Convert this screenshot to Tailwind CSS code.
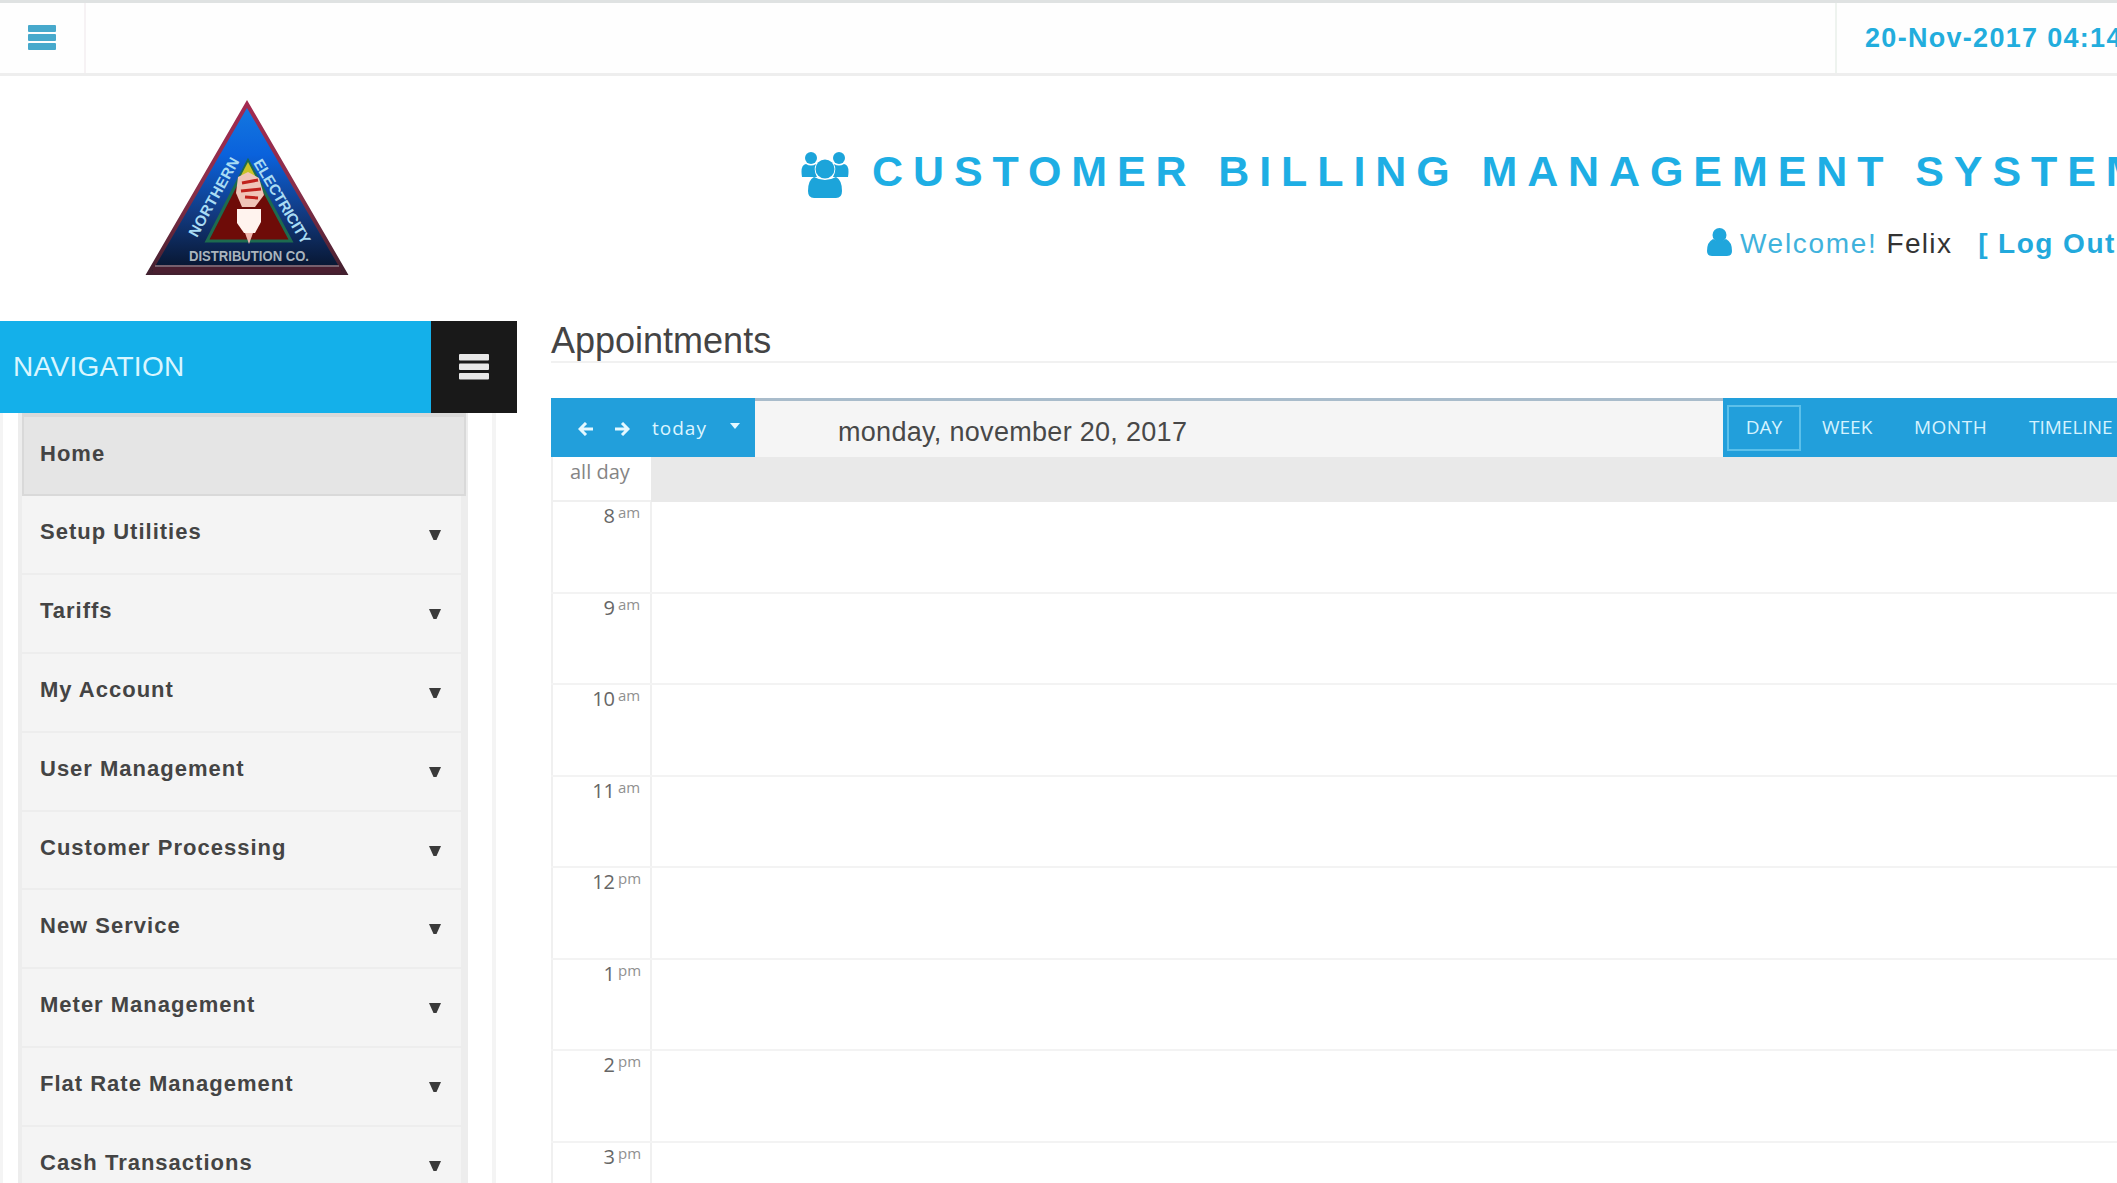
<!DOCTYPE html>
<html lang="en">
<head>
<meta charset="utf-8">
<title>Customer Billing Management System</title>
<script src="https://cdn.jsdelivr.net/npm/@tailwindcss/browser@4"></script>
</head>
<body class="w-[2117px] h-[1183px] overflow-hidden bg-white font-['Liberation_Sans',Arial,sans-serif] whitespace-nowrap">

<!-- Top bar -->
<header class="flex h-[76px] border-t-3 border-b-3 border-t-[#dfe2e2] border-b-[#eeeeee] bg-[#fefefe]">
  <div class="w-[86px] shrink-0 border-r-2 border-[#f6f2f4] pt-[22px] pl-[28px]">
    <svg class="w-[28px] h-[25px]" viewBox="0 0 28 25" fill="#47a9cc"><rect width="28" height="7" rx="1"/><rect y="9" width="28" height="7" rx="1"/><rect y="18" width="28" height="7" rx="1"/></svg>
  </div>
  <div class="w-[1751px] shrink-0 border-r-2 border-[#eef3ef]"></div>
  <div class="pl-[28px] pt-[15px] text-[27px] leading-[40px] tracking-[1.300px] font-bold text-[#22addd]">20-Nov-2017 04:14</div>
</header>

<!-- Brand and title -->
<section class="flex h-[245px]">
  <div class="w-[801px] shrink-0 pl-[145px] pt-[24px]">
    <svg class="w-[204px] h-[176px]" viewBox="0 0 204 176">
      <defs>
        <linearGradient id="sky" x1="0" y1="0" x2="0" y2="1"><stop offset="0" stop-color="#1479e0"/><stop offset=".3" stop-color="#0a62dc"/><stop offset=".65" stop-color="#123a80"/><stop offset="1" stop-color="#071329"/></linearGradient>
        <linearGradient id="edge" x1="0" y1="0" x2="0" y2="1"><stop offset="0" stop-color="#a32a50"/><stop offset=".5" stop-color="#8a2f4a"/><stop offset="1" stop-color="#42202f"/></linearGradient>
      </defs>
      <path d="M102 4 L200 173 H4 Z" fill="url(#sky)" stroke="url(#edge)" stroke-width="4"/>
      <path d="M8 170 H196" stroke="#4a1f30" stroke-width="6"/>
      <path d="M10 166 H194" stroke="#75606e" stroke-width="2"/>
      <path d="M103 61 L146 141 H62 Z" fill="#6e0c08" stroke="#1d6b4f" stroke-width="3"/>
      <path d="M103 62 L113 81 H93 Z" fill="#c9c328"/>
      <path d="M93 77 L103 72 L114 78 L119 95 L110 107 L97 107 L91 93 Z" fill="#f0c5b8"/>
      <path d="M97 83 L113 80 M96 91 L116 89 M100 97 L113 98" stroke="#c0221c" stroke-width="3"/>
      <path d="M92 109 H116 V122 L110 133 H99 L92 123 Z" fill="#fff3ee"/>
      <path d="M100 133 H108 L104 144 Z" fill="#f0b6ae"/>
      <g fill="#a9dcf4" font-family="Liberation Sans, sans-serif" font-weight="bold" font-size="15">
        <text transform="translate(52 138) rotate(-61)" textLength="88">NORTHERN</text>
        <text transform="translate(108 63) rotate(59)" textLength="96">ELECTRICITY</text>
        <text x="44" y="161" font-size="14" fill="#aab4bd" textLength="120" lengthAdjust="spacingAndGlyphs">DISTRIBUTION CO.</text>
      </g>
    </svg>
  </div>
  <div class="grow pt-[64px]">
    <h1 class="flex h-[62px] font-bold text-[43px] leading-[62px] tracking-[9.900px] text-[#1eaee4]">
      <svg class="w-[48px] h-[46px] mt-[12px] mr-[23px] shrink-0" viewBox="0 0 48 46" fill="#1ca4da"><circle cx="10" cy="6" r="6"/><circle cx="38" cy="6" r="6"/><path d="M1 25 Q-1 13 5 12 Q10 15 15 12 Q12 18 16 25 Z M47 25 Q49 13 43 12 Q38 15 33 12 Q36 18 32 25 Z"/><circle cx="24" cy="17" r="9.500"/><path d="M13 25 Q24 31 35 25 Q41 28 41 39 Q41 46 35 46 H13 Q7 46 7 39 Q7 28 13 25 Z"/></svg>
      CUSTOMER BILLING MANAGEMENT SYSTEM
    </h1>
    <div class="flex mt-[22px] pl-[906px] text-[28px] leading-[40px] tracking-[1.300px]">
      <svg class="w-[25px] h-[28px] mt-[4px] mr-[8px] shrink-0" viewBox="0 0 25 28" fill="#20a6dc"><circle cx="12.500" cy="7" r="7"/><path d="M6 11 Q12.500 15 19 11 Q25 14 25 23 Q25 28 20 28 H5 Q0 28 0 23 Q0 14 6 11 Z"/></svg>
      <span class="text-[#3fb2dc] tracking-[1.700px]">Welcome!</span>
      <span class="ml-[9px] text-[#333]">Felix</span>
      <span class="ml-[26px] font-bold text-[#22a9dc] tracking-[1.500px]">[<span class="ml-[9px]">Log Out</span></span>
    </div>
  </div>
</section>

<main class="flex h-[862px]">
  <!-- Sidebar -->
  <aside class="w-[551px] shrink-0">
    <div class="flex w-[517px] h-[92px]">
      <div class="w-[431px] bg-[#14b0ea] text-[#d9f6ff] text-[28px] leading-[92px] pl-[13px] tracking-[.3px]">NAVIGATION</div>
      <div class="w-[86px] bg-[#191919] flex items-center justify-center">
        <svg class="w-[30px] h-[28px]" viewBox="0 0 30 28" fill="#e8e8e8"><rect y="1" width="30" height="6.500" rx="1"/><rect y="10.500" width="30" height="6.500" rx="1"/><rect y="20" width="30" height="6.500" rx="1"/></svg>
      </div>
    </div>
    <div class="w-[496px] h-[770px] border-l-3 border-r-4 border-[#f4f4f4] pl-[15px] pr-[24px]">
      <nav class="h-[770px] border-l-4 border-r-7 border-[#ededed] bg-[#f4f4f4] text-[22px] leading-[30px] tracking-[1px] font-bold text-[#444]">
        <div class="-mr-[5px] flex h-[83px] items-center bg-[#e5e5e5] border-t-4 border-b-2 border-r-2 border-l-2 border-[#d9d9d9] pl-[16px] pb-[4px]">Home</div>
        <div id="menu"></div>
      </nav>
    </div>
  </aside>

  <!-- Appointments calendar -->
  <section class="w-[1566px]">
    <h2 class="h-[42px] border-b-2 border-[#f1f1f1] text-[36px] leading-[39px] text-[#444]">Appointments</h2>
    <div class="mt-[35px] flex h-[59px] bg-[#f5f5f5] border-t-3 border-[#a9bccb]">
      <div class="-mt-[3px] flex w-[204px] h-[59px] items-center bg-[#229fdb] pl-[27px] font-['Open_Sans',sans-serif] text-[19px] text-[#dcf5ff]">
        <svg class="mt-[3px] w-[15px] h-[14px]" viewBox="0 0 15 14" fill="none" stroke="#e4f8ff" stroke-width="3"><path d="M15 7 H3 M8 1 L2 7 L8 13"/></svg>
        <svg class="mt-[3px] ml-[22px] w-[15px] h-[14px]" viewBox="0 0 15 14" fill="none" stroke="#e4f8ff" stroke-width="3"><path d="M0 7 H12 M7 1 L13 7 L7 13"/></svg>
        <span class="ml-[22px] w-[57px] mt-[2px] tracking-[1px] font-medium">today</span>
        <svg class="ml-[21px] mb-[3px] w-[10px] h-[6px]" viewBox="0 0 10 6" fill="#e4f8ff"><path d="M0 0 H10 L5 6 Z"/></svg>
      </div>
      <div class="w-[968px] pl-[83px] text-[27px] leading-[62px] tracking-[.3px] text-[#484848]">monday, november 20, 2017</div>
      <div class="-mt-[3px] flex grow h-[59px] items-center bg-[#229fdb] font-['Open_Sans',sans-serif] text-[19px] text-[#d5f3ff]">
        <div class="ml-[4px] flex h-[46px] w-[74px] items-center justify-center border-2 border-[#5cc0ea]">DAY</div>
        <span class="ml-[21px] w-[92px]">WEEK</span>
        <span class="w-[115px] tracking-[.5px]">MONTH</span>
        <span>TIMELINE</span>
      </div>
    </div>
    <div class="flex h-[45px]">
      <div class="w-[100px] shrink-0 border-l-2 border-b-2 border-[#f0f0f0] pl-[17px] font-['Open_Sans',sans-serif] text-[20px] leading-[29px] text-[#858585]">all day</div>
      <div class="grow bg-[#e9e9e9]"></div>
    </div>
    <div id="hours"></div>
  </section>
</main>

<script>
  document.getElementById('menu').innerHTML = ['Setup Utilities', 'Tariffs', 'My Account', 'User Management', 'Customer Processing', 'New Service', 'Meter Management', 'Flat Rate Management', 'Cash Transactions']
    .map(label => `<div class="flex h-[78.900px] items-center justify-between border-b-2 border-[#ededed] pl-[18px] pr-[20px] pb-[5px]"><span>${label}</span><svg class="w-[12px] h-[10px] mt-[6px]" viewBox="0 0 12 10" fill="#3a3a3a"><path d="M0 0 H12 L7.500 10 H4.500 Z"/></svg></div>`).join('');
  document.getElementById('hours').innerHTML = [[8, 'am'], [9, 'am'], [10, 'am'], [11, 'am'], [12, 'pm'], [1, 'pm'], [2, 'pm'], [3, 'pm']]
    .map(([hour, half]) => `<div class="flex h-[91.500px] border-b-2 border-[#f3f3f3]"><div class="flex w-[101px] shrink-0 justify-end border-l-2 border-r-2 border-[#f0f0f0] pr-[7px] font-['Open_Sans',sans-serif] text-[#666]"><span class="text-[20px] leading-[28px]">${hour}</span><span class="ml-[3px] w-[25px] text-[15px] leading-[21px] text-[#909090]">${half}</span></div></div>`).join('');
</script>
</body>
</html>
